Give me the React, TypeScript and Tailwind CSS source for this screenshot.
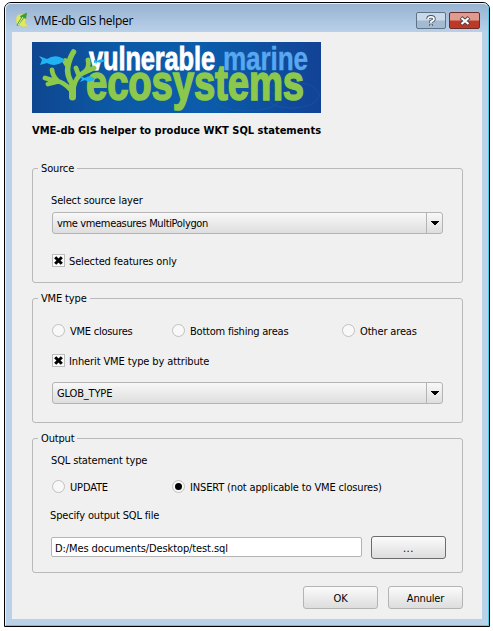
import React from "react";

function Group({ title, className, children }: { title: string; className: string; children: React.ReactNode }) {
  return (
    <section className={`flex w-[431px] flex-col rounded-[3px] border border-[#b9b9b9] ${className}`}>
      <h2 className="-mt-[8px] ml-[5px] h-[15px] self-start bg-[#f0f0f0] px-[3px] leading-[16px]">{title}</h2>
      {children}
    </section>
  );
}

function Combo({ value, className }: { value: string; className: string }) {
  return (
    <div className={`ml-[19px] flex h-[22px] w-[391px] rounded-[3px] border border-[#b4b4b4] bg-linear-to-b from-[#f8f8f8] to-[#dedede] ${className}`}>
      <span className="flex-1 pl-[4px] leading-[22px]">{value}</span>
      <span className="flex w-[16px] items-center justify-center border-l border-[#b4b4b4]">
        <svg width="8" height="5" viewBox="0 0 8 5" shapeRendering="crispEdges">
          <path d="M0 0h8v1h-1v1h-1v1h-1v1h-2v-1h-1v-1h-1v-1h-1z" fill="#000" />
        </svg>
      </span>
    </div>
  );
}

function Check({ label, className }: { label: string; className: string }) {
  return (
    <label className={`ml-[19px] flex h-[13px] items-center ${className}`}>
      <span className="flex size-[13px] items-center justify-center border border-[#bcbcbc] bg-[#fafafa]">
        <svg width="11" height="11" viewBox="0 0 11 11">
          <path d="M2.2 2.2L8.8 8.8M8.8 2.2L2.2 8.8" stroke="#000" strokeWidth="3" />
        </svg>
      </span>
      <span className="ml-[4px] pt-[2px] leading-[15px]">{label}</span>
    </label>
  );
}

function Radio({ label, checked, className }: { label: string; checked?: boolean; className: string }) {
  return (
    <label className={`flex h-[13px] items-center ${className}`}>
      <span className="flex size-[13px] items-center justify-center rounded-full border border-[#c0c0c0] bg-[#f8f8f8]">
        {checked && <span className="size-[7px] rounded-full bg-black" />}
      </span>
      <span className="ml-[5px] pt-[2px] leading-[15px]">{label}</span>
    </label>
  );
}

function Banner() {
  return (
    <svg className="block" width="289" height="71" viewBox="0 0 289 71">
      <defs>
        <linearGradient id="sea" x1="0" y1="0" x2="1" y2="0">
          <stop offset="0" stopColor="#0f4690" />
          <stop offset="0.3" stopColor="#0c5aa6" />
          <stop offset="0.6" stopColor="#0b5cab" />
          <stop offset="1" stopColor="#124296" />
        </linearGradient>
      </defs>
      <rect width="289" height="71" fill="url(#sea)" />
      <g fill="none" stroke="#1f69ae" strokeWidth="0.6" opacity="0.6">
        <ellipse cx="215" cy="58" rx="32" ry="11" />
        <ellipse cx="260" cy="53" rx="27" ry="13" />
      </g>
      <g fontFamily="'Liberation Sans Narrow', 'Liberation Sans', sans-serif" fontWeight="700">
        <text x="57" y="28" fontSize="33" textLength="126" lengthAdjust="spacingAndGlyphs" fill="#fff" stroke="#fff" strokeWidth="0.8">vulnerable</text>
        <text x="191" y="28" fontSize="33" textLength="85" lengthAdjust="spacingAndGlyphs" fill="#58a8ef" stroke="#58a8ef" strokeWidth="0.4">marine</text>
        <text x="54" y="57.500" fontSize="50" textLength="218" lengthAdjust="spacingAndGlyphs" fill="#8cc84b" stroke="#8cc84b" strokeWidth="1.7">ecosystems</text>
      </g>
      <g fill="none" stroke="#8cc84b" strokeLinecap="round" strokeLinejoin="round">
        <path d="M41 43Q34 33 36 24T41.500 10M36 24L33 19" strokeWidth="5.5" />
        <path d="M38 47Q31 40 25 39T13 36M26 39Q21 35 20 28M24 40L16 42M42 44Q44 35 51 31T56 18M51 31L62 26M47 34L44 26" strokeWidth="4.800" />
        <path d="M40.500 55V44" strokeWidth="7" />
      </g>
      <g fill="#20b3f4">
        <path d="M7 14L15 17Q24 11 33 18Q24 26 15 21L8 23L10 18Z" />
        <path d="M48 34L53 36Q58 32 63 37Q58 42 53 38L48 40L50 37Z" />
        <path d="M62 18L65 19Q69 16 73 18.500Q69 22 65 20L62 21Z" />
      </g>
    </svg>
  );
}

function PushButton({ label, className }: { label: string; className: string }) {
  return (
    <button className={`h-[23px] w-[75px] rounded-[3px] border bg-linear-to-b from-[#fbfbfb] to-[#dddddd] pt-px text-center leading-[21px] ${className}`}>
      {label}
    </button>
  );
}

export default function App() {
  return (
    <div className="h-[631px] w-[493px] overflow-hidden bg-white pt-[2px] pl-[4px] font-['DejaVu_Sans_Condensed','DejaVu_Sans',sans-serif] text-[11px] tracking-[-0.15px] text-black [font-stretch:condensed]">
      <div className="flex h-[625px] w-[486px] flex-col rounded-t-[7px] border border-black bg-[#bad1ea]">
        <div className="flex h-[624px] flex-1 flex-col rounded-t-[6px] border-t border-r border-b border-l border-t-[#e4eef8] border-r-[#4fcbe4] border-b-[#4fcbe4] border-l-[#eaf3fb] bg-[#bad1ea]">
          <header className="flex h-[28px] shrink-0 rounded-t-[5px] bg-linear-to-b from-[#98b4d2] to-[#b9d0e9]">
            <svg className="mt-[8px] ml-[9px]" width="14" height="16" viewBox="0 0 14 16">
              <path d="M7 2Q1 2 1 8Q1 14 6 14L8 15L13 14L10 11Q12 6 10 3Z" fill="#e6e85b" stroke="#c6d17b" strokeWidth="0.6" />
              <path d="M1.500 13L6 6L5 4L12 0.500L11 7L9 6L3 14Z" fill="#3b9a3c" />
              <path d="M3 13L8 5" stroke="#eaf5bc" strokeWidth="1" />
            </svg>
            <h1 className="mt-[8px] ml-[5px] font-['Open_Sans',sans-serif] text-[12px] leading-[17px] tracking-[-0.3px] [font-stretch:normal]">VME-db GIS helper</h1>
            <div className="mt-[8px] mr-[8px] ml-auto flex gap-[3px]">
              <span className="flex h-[17px] w-[30px] items-center justify-center rounded-[2px] border border-[#5f7388] bg-linear-to-b from-[#c9d9ea] from-45% to-[#a3bad2] to-55%">
                <svg width="12" height="12" viewBox="0 0 12 12" fill="none">
                  <path d="M3 4Q3 1.800 6 1.800T9 4Q9 5.500 6 6.500V8M6 9V11" stroke="#435160" strokeWidth="3.400" />
                  <path d="M3 4Q3 1.800 6 1.800T9 4Q9 5.500 6 6.500V8M6 9.500V10.800" stroke="#fff" strokeWidth="1.700" />
                </svg>
              </span>
              <span className="flex h-[17px] w-[31px] items-center justify-center rounded-[2px] border border-[#682d2c] bg-linear-to-b from-[#df9c8e] from-45% to-[#bd3927] to-55%">
                <svg width="12" height="10" viewBox="0 0 12 10" fill="none">
                  <path d="M2 1.500L10 8.500M10 1.500L2 8.500" stroke="#554047" strokeWidth="4" />
                  <path d="M2.500 2L9.500 8M9.500 2L2.500 8" stroke="#fff" strokeWidth="2.200" />
                </svg>
              </span>
            </div>
          </header>
          <main className="ml-[6px] flex h-[587px] w-[470px] flex-col bg-[#f0f0f0] pt-[10px] pl-[20px]">
            <Banner />
            <p className="mt-[9px] h-[15px] pt-px font-bold leading-[16px] tracking-normal whitespace-nowrap">VME-db GIS helper to produce WKT SQL statements</p>
            <Group title="Source" className="mt-[31px] h-[115px]">
              <p className="mt-[17px] ml-[18px] h-[15px] leading-[15px]">Select source layer</p>
              <Combo value="vme vmemeasures MultiPolygon" className="mt-[4px] tracking-[-0.35px]" />
              <Check label="Selected features only" className="mt-[20px]" />
            </Group>
            <Group title="VME type" className="mt-[15px] h-[125px]">
              <div className="mt-[18px] ml-[19px] flex">
                <Radio label="VME closures" className="w-[120px] tracking-[-0.25px]" />
                <Radio label="Bottom fishing areas" className="w-[170px] tracking-[-0.22px]" />
                <Radio label="Other areas" className="" />
              </div>
              <Check label="Inherit VME type by attribute" className="mt-[17px] tracking-[-0.12px]" />
              <Combo value="GLOB_TYPE" className="mt-[15px]" />
            </Group>
            <Group title="Output" className="mt-[15px] h-[135px]">
              <p className="mt-[7px] ml-[18px] h-[15px] leading-[15px]">SQL statement type</p>
              <div className="mt-[12px] ml-[19px] flex">
                <Radio label="UPDATE" className="w-[120px]" />
                <Radio label="INSERT (not applicable to VME closures)" checked className="" />
              </div>
              <p className="mt-[15px] ml-[17px] h-[15px] leading-[15px]">Specify output SQL file</p>
              <div className="mt-[13px] ml-[18px] flex">
                <div className="mt-px h-[20px] w-[311px] rounded-[2px] border border-[#b4b4b4] bg-white pl-[3px] leading-[21px] tracking-[-0.1px]">D:/Mes documents/Desktop/test.sql</div>
                <PushButton label="..." className="ml-[9px] border-[#6c6c6c] tracking-[0.6px]" />
              </div>
            </Group>
            <div className="mt-[13px] ml-[271px] flex gap-[10px]">
              <PushButton label="OK" className="border-[#b4b4b4]" />
              <PushButton label="Annuler" className="border-[#b4b4b4]" />
            </div>
          </main>
        </div>
      </div>
    </div>
  );
}
